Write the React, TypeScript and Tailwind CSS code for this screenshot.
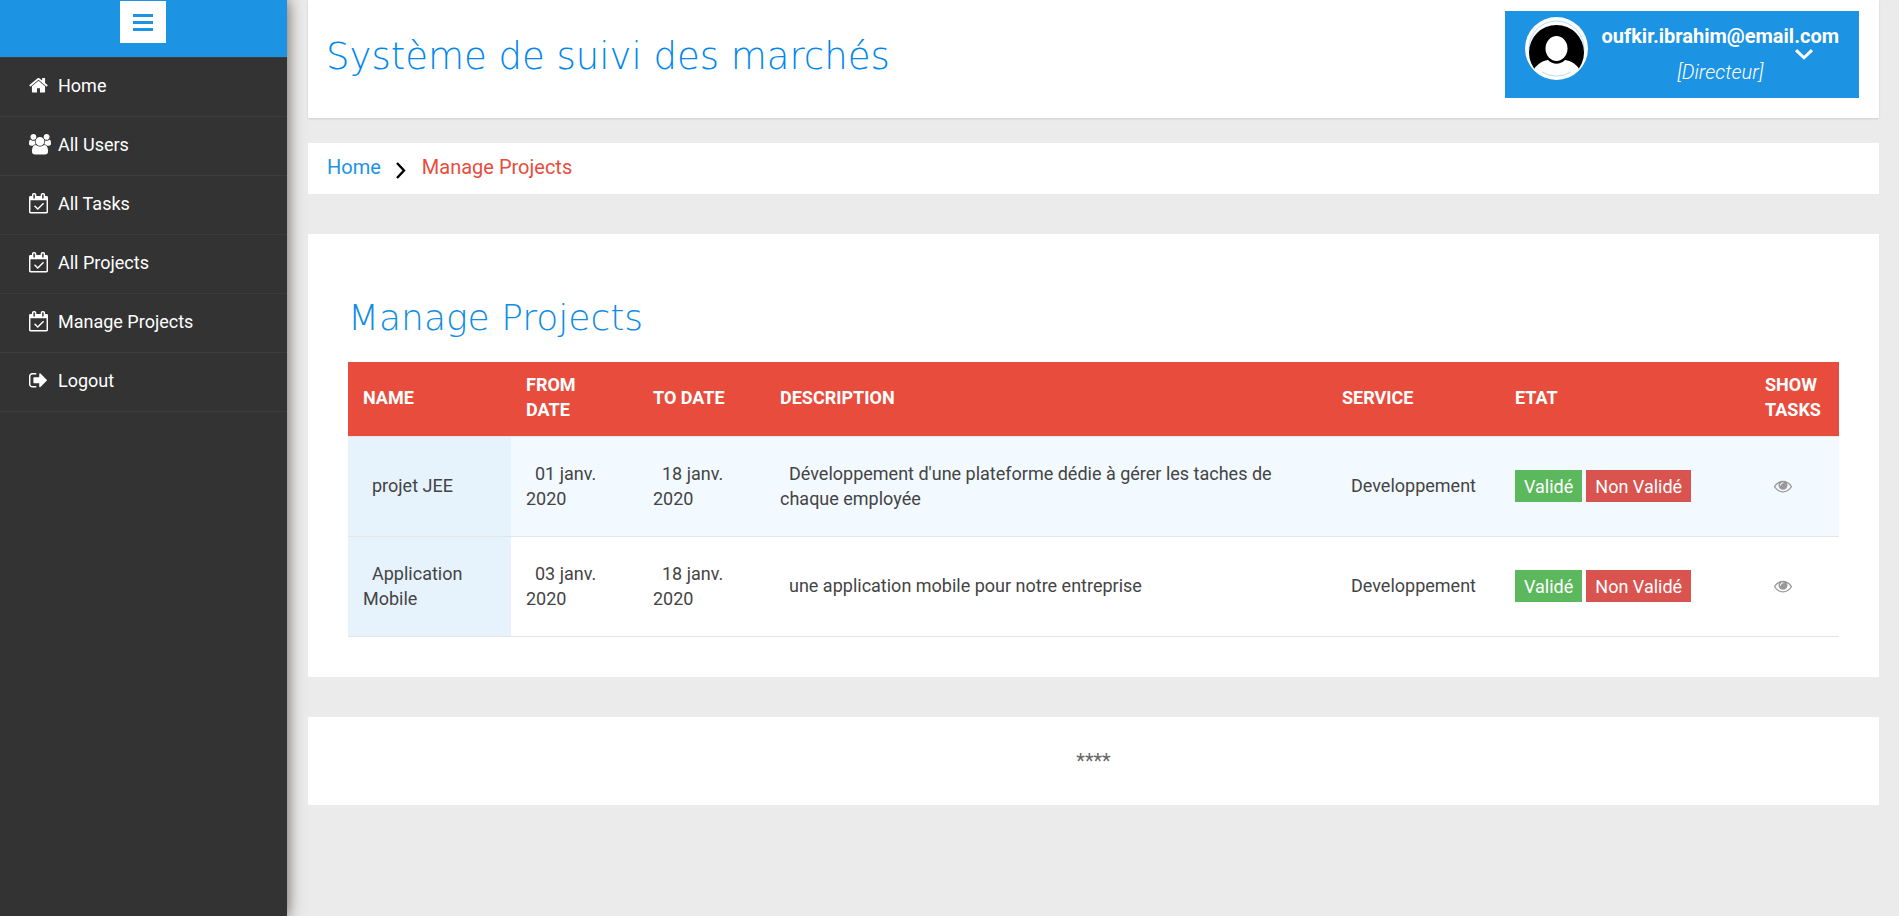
import { ReactNode } from "react";

const ICONS = {
  home: {
    box: "0 0 1664 1792",
    width: "w-[19px]",
    d: "M1408 992v480q0 26-19 45t-45 19h-384v-384h-256v384h-384q-26 0-45-19t-19-45v-480q0-1 .5-3t.5-3l575-474 575 474q1 2 1 6zm223-69l-62 74q-8 9-21 11h-3q-13 0-21-7l-692-577-692 577q-12 8-24 7-13-2-21-11l-62-74q-8-10-7-23.5t11-21.5l719-599q32-26 76-26t76 26l244 204v-195q0-14 9-23t23-9h192q14 0 23 9t9 23v408l219 182q10 8 11 21.5t-7 23.5z",
  },
  users: {
    box: "0 0 1920 1792",
    width: "w-[22px]",
    d: "M593 896q-162 5-265 128h-134q-82 0-138-40.5t-56-118.5q0-353 124-353 6 0 43.5 21t97.5 42.5 119 21.5q67 0 133-23-5 37-5 66 0 139 81 256zm1071 637q0 120-73 189.5t-194 69.5h-874q-121 0-194-69.5t-73-189.5q0-53 3.5-103.5t14-109 26.5-108.5 43-97.5 62-81 85.5-53.5 111.5-20q10 0 43 21.5t73 48 107 48 135 21.5 135-21.5 107-48 73-48 43-21.5q61 0 111.5 20t85.5 53.5 62 81 43 97.5 26.5 108.5 14 109 3.5 103.5zm-1024-1277q0 106-75 181t-181 75-181-75-75-181 75-181 181-75 181 75 75 181zm704 384q0 159-112.5 271.5t-271.5 112.5-271.5-112.5-112.5-271.5 112.5-271.5 271.5-112.5 271.5 112.5 112.5 271.5zm576 225q0 78-56 118.5t-138 40.5h-134q-103-123-265-128 81-117 81-256 0-29-5-66 66 23 133 23 59 0 119-21.5t97.5-42.5 43.5-21q124 0 124 353zm-128-609q0 106-75 181t-181 75-181-75-75-181 75-181 181-75 181 75 75 181z",
  },
  calendar: {
    box: "0 0 1664 1792",
    width: "w-[19px]",
    d: "M1303 964l-512 512q-10 9-23 9t-23-9l-288-288q-9-10-9-23t9-22l46-46q9-9 22-9t23 9l220 220 444-444q10-9 23-9t22 9l46 46q9 9 9 22t-9 23zm-1175 700h1408v-1024h-1408v1024zm384-1216v-288q0-14-9-23t-23-9h-64q-14 0-23 9t-9 23v288q0 14 9 23t23 9h64q14 0 23-9t9-23zm768 0v-288q0-14-9-23t-23-9h-64q-14 0-23 9t-9 23v288q0 14 9 23t23 9h64q14 0 23-9t9-23zm384-64v1280q0 52-38 90t-90 38h-1408q-52 0-90-38t-38-90v-1280q0-52 38-90t90-38h128v-96q0-66 47-113t113-47h64q66 0 113 47t47 113v96h384v-96q0-66 47-113t113-47h64q66 0 113 47t47 113v96h128q52 0 90 38t38 90z",
  },
  logout: {
    box: "64 0 1664 1792",
    width: "w-[19px]",
    d: "M704 1440q0 4 1 20t.5 26.5-3 23.5-10 19.5-20.5 6.5h-320q-119 0-203.5-84.5t-84.5-203.5v-704q0-119 84.5-203.5t203.5-84.5h320q13 0 22.5 9.5t9.5 22.5q0 4 1 20t.5 26.5-3 23.5-10 19.5-20.5 6.5h-320q-66 0-113 47t-47 113v704q0 66 47 113t113 47h312l11.5 1 11.5 3 8 5.5 7 9 2 13.5zm928-544q0 26-19 45l-544 544q-19 19-45 19t-45-19-19-45v-288h-448q-26 0-45-19t-19-45v-384q0-26 19-45t45-19h448v-288q0-26 19-45t45-19 45 19l544 544q19 19 19 45z",
  },
  eye: {
    box: "0 0 1792 1792",
    width: "w-[18px]",
    d: "M1664 960q-152-236-381-353 61 104 61 225 0 185-131.5 316.5t-316.5 131.5-316.5-131.5-131.5-316.5q0-121 61-225-229 117-381 353 133 205 333.5 326.5t434.5 121.5 434.5-121.5 333.5-326.5zm-720-384q0-20-14-34t-34-14q-125 0-214.5 89.5t-89.5 214.5q0 20 14 34t34 14 34-14 14-34q0-86 61-147t147-61q20 0 34-14t14-34zm848 384q0 34-20 69-140 230-376.5 368.5t-499.5 138.5-499.5-139-376.5-368q-20-35-20-69t20-69q140-229 376.5-368t499.5-139 499.5 139 376.5 368q20 35 20 69z",
  },
};

type IconName = keyof typeof ICONS;

function Icon({ name }: { name: IconName }) {
  const icon = ICONS[name];
  return (
    <svg viewBox={icon.box} className={`${icon.width} shrink-0 fill-current`} aria-hidden="true">
      <path d={icon.d} />
    </svg>
  );
}

const NAV: { label: string; icon: IconName }[] = [
  { label: "Home", icon: "home" },
  { label: "All Users", icon: "users" },
  { label: "All Tasks", icon: "calendar" },
  { label: "All Projects", icon: "calendar" },
  { label: "Manage Projects", icon: "calendar" },
  { label: "Logout", icon: "logout" },
];

const PROJECTS = [
  {
    name: "projet JEE",
    from: "01 janv. 2020",
    to: "18 janv. 2020",
    description: "Développement d'une plateforme dédie à gérer les taches de chaque employée",
    service: "Developpement",
  },
  {
    name: "Application Mobile",
    from: "03 janv. 2020",
    to: "18 janv. 2020",
    description: "une application mobile pour notre entreprise",
    service: "Developpement",
  },
];

const COLUMNS = [
  { label: "Name", width: "w-[163px]" },
  { label: "From Date", width: "w-[127px]" },
  { label: "To Date", width: "w-[127px]" },
  { label: "Description", width: "" },
  { label: "Service", width: "w-[173px]" },
  { label: "Etat", width: "w-[250px]" },
  { label: "Show Tasks", width: "w-[89px]" },
];

function Cell({ children }: { children: ReactNode }) {
  return <td className="px-[15px] pb-px indent-[9px]">{children}</td>;
}

function Sidebar() {
  return (
    <aside className="z-10 w-[287px] shrink-0 bg-[#333333] text-white shadow-[0_0_14px_1px_rgba(90,74,70,0.85)]">
      <div className="flex h-[57px] items-start justify-center bg-[#1c93e3] pt-px pr-px">
        <button type="button" aria-label="Toggle menu" className="flex h-[42px] w-[46px] items-center justify-center bg-white text-[#1c93e3]">
          <svg viewBox="0 0 20 17" className="w-5 fill-current" aria-hidden="true">
            <path d="M0 0h20v3H0zM0 7h20v3H0zM0 14h20v3H0z" />
          </svg>
        </button>
      </div>
      <nav>
        <ul className="border-t border-[#3c3c3c]">
          {NAV.map((item) => (
            <li key={item.label} className="border-b border-[#3c3c3c]">
              <a href="#" className="flex h-[58px] items-center pb-[3px] pl-[29px]">
                <span className="flex w-[29px]">
                  <Icon name={item.icon} />
                </span>
                <span className="text-lg">{item.label}</span>
              </a>
            </li>
          ))}
        </ul>
      </nav>
    </aside>
  );
}

function UserMenu() {
  return (
    <button type="button" className="relative flex h-[87px] items-start gap-[14px] bg-[#1c93e3] pt-[6px] pr-5 pl-5 text-white">
      <svg viewBox="0 0 63 63" className="w-[63px] shrink-0" aria-hidden="true">
        <defs>
          <clipPath id="avatar">
            <circle cx="31.5" cy="35.5" r="27.5" />
          </clipPath>
        </defs>
        <circle cx="31.5" cy="31.5" r="31.5" fill="#fff" />
        <circle cx="31.5" cy="31.5" r="27.5" fill="none" stroke="#b9dcf6" />
        <g clipPath="url(#avatar)">
          <rect x="4" y="8" width="55" height="44" fill="#000" />
          <path d="M8 60V53c4-5 8-9 15-10 5 5 12 5 17 0 7 1 12 5 15 10v7z" fill="#fff" />
          <ellipse cx="31.5" cy="31.5" rx="11" ry="12.5" fill="#fff" />
        </g>
        <path d="M17 55a27.5 27.5 0 0 0 29 0" fill="none" stroke="#b9dcf6" />
      </svg>
      <span className="flex flex-col items-center text-xl">
        <span className="mt-[5px] leading-7 font-bold">oufkir.ibrahim@email.com</span>
        <span className="mt-2 leading-7 font-light italic">[Directeur]</span>
      </span>
      <svg viewBox="0 0 18 11" className="absolute top-[38px] right-[46px] w-[18px]" fill="none" stroke="currentColor" strokeWidth="3" aria-hidden="true">
        <path d="M1 1.2l8 7.6 8-7.6" />
      </svg>
    </button>
  );
}

export default function App() {
  return (
    <div className="flex min-h-screen bg-[#ebebeb] font-[Roboto,sans-serif] text-[#444444]">
      <Sidebar />
      <div className="flex min-w-0 flex-1 flex-col pr-5 pl-[21px]">
        <header className="flex h-[118px] items-start justify-between bg-white pt-[11px] pr-5 pl-[18px] shadow-[0_1px_2px_rgba(0,0,0,0.12)]">
          <h1 className="pt-[22px] font-['DejaVu_Sans',sans-serif] text-[37px] leading-[48px] font-extralight text-[#0088ee]">
            Système de suivi des marchés
          </h1>
          <UserMenu />
        </header>

        <nav aria-label="Breadcrumb" className="mt-[25px] flex h-[51px] items-center bg-white pb-[3px] pl-[19px] text-xl">
          <a href="#" className="text-[#1c93e3]">Home</a>
          <svg viewBox="0 0 10 17" className="mt-[6px] mr-4 ml-[15px] w-[10px]" fill="none" stroke="#000" strokeWidth="2.4" aria-hidden="true">
            <path d="M1 1l7 7.5L1 16" />
          </svg>
          <span className="text-[#e84c3d]">Manage Projects</span>
        </nav>

        <main className="mt-10 bg-white p-10">
          <h2 className="pt-5 pb-5 font-['DejaVu_Sans',sans-serif] text-[36px] leading-[48px] font-extralight text-[#0f8ce6]">
            Manage Projects
          </h2>
          <table className="w-full table-fixed border-collapse text-left text-lg leading-[25px]">
            <thead>
              <tr className="h-[74px] border-b border-[#e5e5e5] bg-[#e84c3d] text-white uppercase">
                {COLUMNS.map((column) => (
                  <th key={column.label} scope="col" className={`${column.width} px-[15px] pb-[3px] font-bold`}>
                    {column.label}
                  </th>
                ))}
              </tr>
            </thead>
            <tbody>
              {PROJECTS.map((project) => (
                <tr key={project.name} className="h-[100px] border-b border-[#e5e5e5] odd:bg-[#f2f9ff]">
                  <th scope="row" className="bg-[#e6f3fd] px-[15px] pb-px indent-[9px] font-normal">{project.name}</th>
                  <Cell>{project.from}</Cell>
                  <Cell>{project.to}</Cell>
                  <Cell>{project.description}</Cell>
                  <Cell>{project.service}</Cell>
                  <td className="px-[15px]">
                    <div className="flex gap-1 text-white">
                      <button type="button" className="h-8 bg-[#5cb85c] px-[9px]">Validé</button>
                      <button type="button" className="h-8 bg-[#d9534f] px-[9px]">Non Validé</button>
                    </div>
                  </td>
                  <td className="px-[15px]">
                    <a href="#" aria-label="Show tasks" className="flex pl-[9px] text-[#999999]">
                      <Icon name="eye" />
                    </a>
                  </td>
                </tr>
              ))}
            </tbody>
          </table>
        </main>

        <footer className="mt-10 flex h-[88px] items-center justify-center bg-white text-xl text-[#666666]">
          ****
        </footer>
      </div>
    </div>
  );
}
